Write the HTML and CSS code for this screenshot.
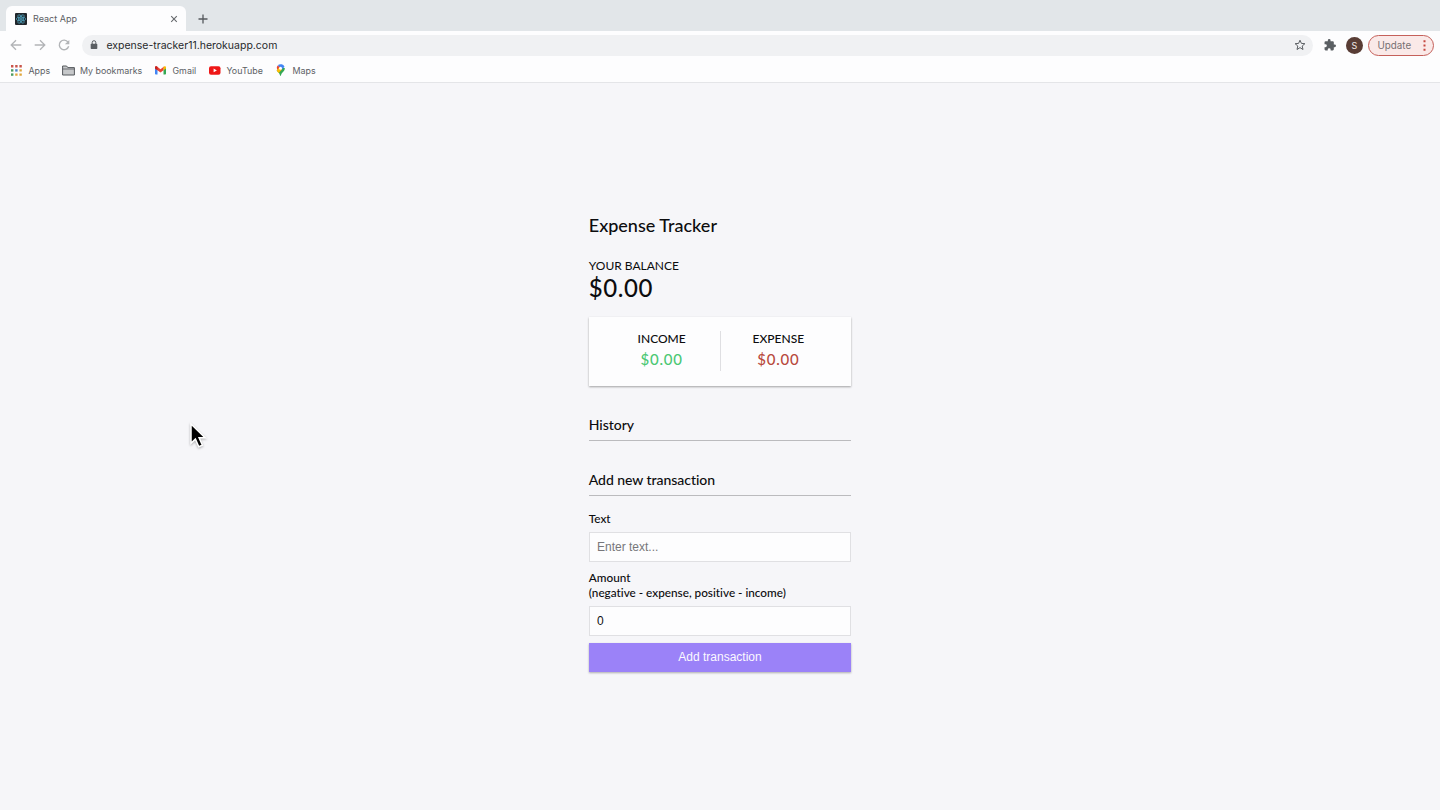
FILE: index.html
```html
<!DOCTYPE html>
<html lang="en">
<head>
<meta charset="utf-8">
<title>React App</title>
<link rel="stylesheet" href="styles.css">
</head>
<body>
<header class="browser">
  <div class="tabstrip">
    <div class="tab">
      <svg class="favicon" viewBox="0 0 12 12"><rect width="12" height="12" rx="1" fill="#20262b"/><g fill="none" stroke="#4c9db8" stroke-width=".8"><ellipse cx="6" cy="6" rx="4.8" ry="1.9"/><ellipse cx="6" cy="6" rx="4.8" ry="1.9" transform="rotate(60 6 6)"/><ellipse cx="6" cy="6" rx="4.8" ry="1.9" transform="rotate(120 6 6)"/></g><circle cx="6" cy="6" r="1" fill="#4c9db8"/></svg>
      <span class="tab-title">React App</span>
      <svg class="tab-close" viewBox="0 0 8 8"><path d="M1.200 1.200l5.600 5.600M6.800 1.200L1.200 6.800" stroke="#66696d" stroke-width="1.100"/></svg>
    </div>
    <svg class="tab-new" viewBox="0 0 10 10"><path d="M5 .5v9M.5 5h9" stroke="#55595d" stroke-width="1.3"/></svg>
  </div>
  <div class="toolbar">
    <svg class="nav" viewBox="0 0 12 12"><path d="M11.3 6H1.2M6 1.2L1.2 6 6 10.8" fill="none" stroke="#b2b4b7" stroke-width="1.3"/></svg>
    <svg class="nav" viewBox="0 0 12 12"><path d="M.7 6h10.1M6 1.2L10.8 6 6 10.8" fill="none" stroke="#b2b4b7" stroke-width="1.3"/></svg>
    <svg class="nav" viewBox="0 0 12 12"><path d="M10 3.1A4.8 4.8 0 1 0 10.7 7.3" fill="none" stroke="#b2b4b7" stroke-width="1.4"/><path d="M11.3.9v4.4H6.9z" fill="#b2b4b7"/></svg>
    <div class="address">
      <svg class="lock" viewBox="0 0 8 10"><path d="M2.2 4V2.5a1.8 1.8 0 0 1 3.6 0V4" fill="none" stroke="#5b5f63" stroke-width="1"/><rect x=".7" y="3.7" width="6.6" height="5.3" rx=".7" fill="#5b5f63"/></svg>
      <span class="url">expense-tracker11.herokuapp.com</span>
      <svg class="star" viewBox="0 0 12 12"><path d="M6 1.2l1.4 3.2 3.5.3-2.7 2.3.8 3.5L6 8.6l-3 1.9.8-3.5L1.1 4.7l3.5-.3z" fill="none" stroke="#5b5f63" stroke-width="1"/></svg>
    </div>
    <svg class="puzzle" viewBox="1 1 22 22"><path fill="#5b5f63" d="M20.5 11H19V7a2 2 0 0 0-2-2h-4V3.500a2.500 2.500 0 0 0-5 0V5H4a2 2 0 0 0-2 2v3.800h1.500a2.700 2.700 0 0 1 0 5.400H2V20a2 2 0 0 0 2 2h3.800v-1.500a2.700 2.700 0 0 1 5.400 0V22H17a2 2 0 0 0 2-2v-4h1.500a2.500 2.500 0 0 0 0-5z"/></svg>
    <span class="avatar">S</span>
    <div class="update"><span>Update</span><svg class="dots" viewBox="0 0 3 11"><path fill="#c5473f" d="M.5.3h2v2h-2zM.5 4.5h2v2h-2zM.5 8.700h2v2h-2z"/></svg></div>
  </div>
  <nav class="bookmarks">
    <a class="bookmark apps"><svg viewBox="0 0 11 11"><path fill="#c9544a" d="M0 0h2.400v2.400H0zM4.200 0h2.400v2.400H4.200zM8.400 0h2.400v2.400H8.400z"/><path fill="#4b9b61" d="M0 4.200h2.400v2.400H0z"/><path fill="#4a82c9" d="M4.200 4.200h2.400v2.400H4.200z"/><path fill="#dfa63b" d="M8.400 4.200h2.400v2.400H8.400zM8.400 8.400h2.400v2.400H8.400zM4.200 8.400h2.400v2.400H4.200z"/><path fill="#4b9b61" d="M0 8.400h2.400v2.400H0z"/></svg><span>Apps</span></a>
    <a class="bookmark folder"><svg viewBox="0 0 13 11"><path d="M.6 10V1h4l1.200 1.600h6.600V10z" fill="#c6c8ca" stroke="#55595d"/><path d="M.6 4h11.800" stroke="#55595d" stroke-width=".8"/></svg><span>My bookmarks</span></a>
    <a class="bookmark gmail"><svg viewBox="0 0 11 9"><path fill="#4285f4" d="M0 1.500l2.500 1.800V8.500H.8A.8.8 0 0 1 0 7.700z"/><path fill="#34a853" d="M11 1.500L8.500 3.300V8.500h1.700a.8.8 0 0 0 .8-.8z"/><path fill="#ea4335" d="M0 1.500C0 .3 1.200 0 2 .6l3.500 2.600L9 .6l-.5 3.600-3 2.300-3-2.300L0 2.500z"/><path fill="#fbbc04" d="M8.500 1L9 .6c.8-.6 2-.3 2 .9v1l-2.500 1.800z"/><path fill="#c5221f" d="M0 1.500C0 .3 1.200 0 2 .6l.5.4v3.300L0 2.500z"/></svg><span>Gmail</span></a>
    <a class="bookmark youtube"><svg viewBox="0 0 12 9"><rect y=".2" width="11.500" height="8.500" rx="2" fill="#ee1717"/><path d="M4.600 2.600l3.300 1.850-3.300 1.850z" fill="#fff"/></svg><span>YouTube</span></a>
    <a class="bookmark maps"><svg viewBox="0 0 9 12"><path fill="#34a853" d="M.6 6.200C1.500 8 3.700 9 4 11.300c.2.900.800.900 1 0C5.300 8.800 9 7.500 8.800 4L6 3.500z"/><path fill="#4285f4" d="M2 1A4.300 4.300 0 0 1 8.500 2.700L4.500 7z"/><path fill="#ea4335" d="M1.600 1.400L4.300 3.600 1.800 6.400A4.300 4.300 0 0 1 1.600 1.400z"/><path fill="#fbbc04" d="M.7 6.400L3.300 3.300 6 5.500 2.700 9C1.800 8 1 7.200.7 6.400z"/><circle cx="4.500" cy="4.200" r="1.500" fill="#fff"/></svg><span>Maps</span></a>
  </nav>
</header>
<main class="page">
  <div class="container">
    <h2 class="title">Expense Tracker</h2>
    <h4 class="balance-label">Your Balance</h4>
    <h1 class="balance">$0.00</h1>
    <section class="summary">
      <div class="summary-item"><h4>Income</h4><p class="money plus">$0.00</p></div>
      <div class="summary-item"><h4>Expense</h4><p class="money minus">$0.00</p></div>
    </section>
    <h3 class="section-title history">History</h3>
    <h3 class="section-title add">Add new transaction</h3>
    <form>
      <label for="text">Text</label>
      <input id="text" type="text" placeholder="Enter text...">
      <label class="amount-label" for="amount">Amount<br>(negative - expense, positive - income)</label>
      <input id="amount" type="text" value="0">
      <button class="btn" type="button">Add transaction</button>
    </form>
  </div>
</main>
<svg class="cursor" viewBox="0 0 18 28"><path d="M2 2v19.200l4.400-4.100 3.400 7.600 3.600-1.600-3.300-7.400h6z" fill="#000" stroke="#fff" stroke-width="1.500"/></svg>
</body>
</html>
```
FILE: styles.css
```css
* { box-sizing: border-box; margin: 0; padding: 0; }
body {
  height: 810px;
  overflow: hidden;
  background: #f6f6f9;
  font-family: Lato, "Liberation Sans", sans-serif;
  font-size: 12px;
  font-variant-ligatures: none;
  color: #0c0c0e;
}
svg { display: block; flex: none; }

.browser {
  height: 83px;
  background: #fdfdfe;
  border-bottom: 1px solid #e4e5e8;
  font-family: Inter, "Liberation Sans", sans-serif;
  color: #5c6064;
}
.tabstrip { display: flex; align-items: flex-end; height: 31px; padding-left: 6px; background: #e2e6e9; }
.tab {
  display: flex;
  align-items: center;
  width: 180px;
  height: 25px;
  padding: 0 8px 0 9px;
  background: #fdfdfe;
  border-radius: 6px 6px 0 0;
}
.favicon { width: 12px; height: 12px; }
.tab-title { flex: 1; margin-left: 6px; font-size: 9px; }
.tab-close { width: 8px; height: 8px; }
.tab-new { width: 10px; height: 10px; margin: 0 0 7px 11.5px; }

.toolbar { display: flex; align-items: center; height: 28px; padding: 0 6px 0 10.4px; }
.nav { width: 12px; height: 12px; margin-right: 12px; }
.address {
  display: flex;
  align-items: center;
  width: 1231px;
  height: 21px;
  margin-left: -.5px;
  padding: 0 6.8px 0 8.5px;
  border-radius: 11px;
  background: #f0f1f3;
}
.lock { width: 8px; height: 10px; }
.url { flex: 1; margin-left: 8px; font-size: 10.5px; color: #27292c; }
.star { width: 12px; height: 12px; }
.puzzle { width: 12px; height: 12px; margin-left: 11.3px; }
.avatar {
  width: 17px;
  height: 17px;
  margin-left: 9.7px;
  border-radius: 50%;
  background: #593d35;
  color: #f1e9e7;
  font-size: 9px;
  line-height: 17px;
  text-align: center;
}
.update {
  display: flex;
  align-items: center;
  justify-content: space-between;
  width: 66px;
  height: 21px;
  margin-left: auto;
  padding: 0 7.5px 0 8.5px;
  border: 1px solid #c5605a;
  border-radius: 11px;
  background: #fae9e8;
  color: #777073;
  font-size: 9.8px;
}
.dots { width: 3px; height: 11px; }

.bookmarks { display: flex; align-items: center; height: 22px; padding-left: 11px; font-size: 8.9px; }
.bookmark { display: flex; align-items: center; }
.apps svg { width: 11px; height: 11px; margin-right: 6.5px; }
.apps { width: 51px; }
.folder svg { width: 13px; height: 11px; margin-right: 5px; }
.folder { width: 93px; }
.gmail svg { width: 11px; height: 9px; margin-right: 6.5px; }
.gmail { width: 54px; }
.youtube svg { width: 12px; height: 9px; margin-right: 5.5px; }
.youtube { width: 66.5px; }
.maps svg { width: 9px; height: 12px; margin-right: 8px; }

.page { padding-top: 131px; }
.container { width: 262.5px; margin: 0 auto; }
h1, h2, h3, h4 { font-weight: 500; }
.title { height: 22px; line-height: 22px; font-size: 18px; }
.balance-label { margin-top: 22px; line-height: 16px; font-size: 12px; font-weight: 400; text-transform: uppercase; }
.balance { line-height: 27px; font-size: 24px; letter-spacing: .6px; }
.summary {
  display: flex;
  height: 69px;
  margin-top: 16px;
  padding: 14px 15px 15px;
  background: #fdfdfe;
  box-shadow: 0 1px 2px rgba(0, 0, 0, .35);
}
.summary-item { flex: 1; text-align: center; }
.summary-item + .summary-item { border-left: 1px solid #dfdfe2; }
.summary-item h4 { line-height: 16px; font-size: 12px; text-transform: uppercase; }
.money { line-height: 25px; font-size: 15px; letter-spacing: .75px; font-weight: 500; }
.plus { color: #4bc874; }
.minus { color: #b84a3d; }
.section-title { border-bottom: 1px solid #bbbbbe; font-size: 14px; line-height: 17px; padding-bottom: 7px; letter-spacing: -.04px; }
.history, .add { margin-top: 30px; }
form { padding-top: 16px; }
label { display: block; line-height: 14.5px; font-size: 11.75px; font-weight: 500; }
input {
  display: block;
  width: 100%;
  height: 30px;
  margin-top: 5.5px;
  padding: 0 7.25px;
  border: 1px solid #e0e0e3;
  background: #fdfdfe;
  font: 12px "Liberation Sans", Arial, sans-serif;
  color: #111;
}
input::placeholder { color: #77777a; }
.amount-label { margin-top: 9px; }
.btn {
  display: block;
  width: 100%;
  height: 29px;
  margin-top: 7.5px;
  padding-bottom: 1px;
  border: 0;
  background: #9b82f8;
  box-shadow: 0 1px 2px rgba(0, 0, 0, .3);
  font: 12px "Liberation Sans", Arial, sans-serif;
  color: #fbf9ff;
}
.cursor {
  position: absolute;
  left: 189px;
  top: 422px;
  width: 18px;
  height: 28px;
  filter: drop-shadow(0 1px 1px rgba(0, 0, 0, .3));
}
```
